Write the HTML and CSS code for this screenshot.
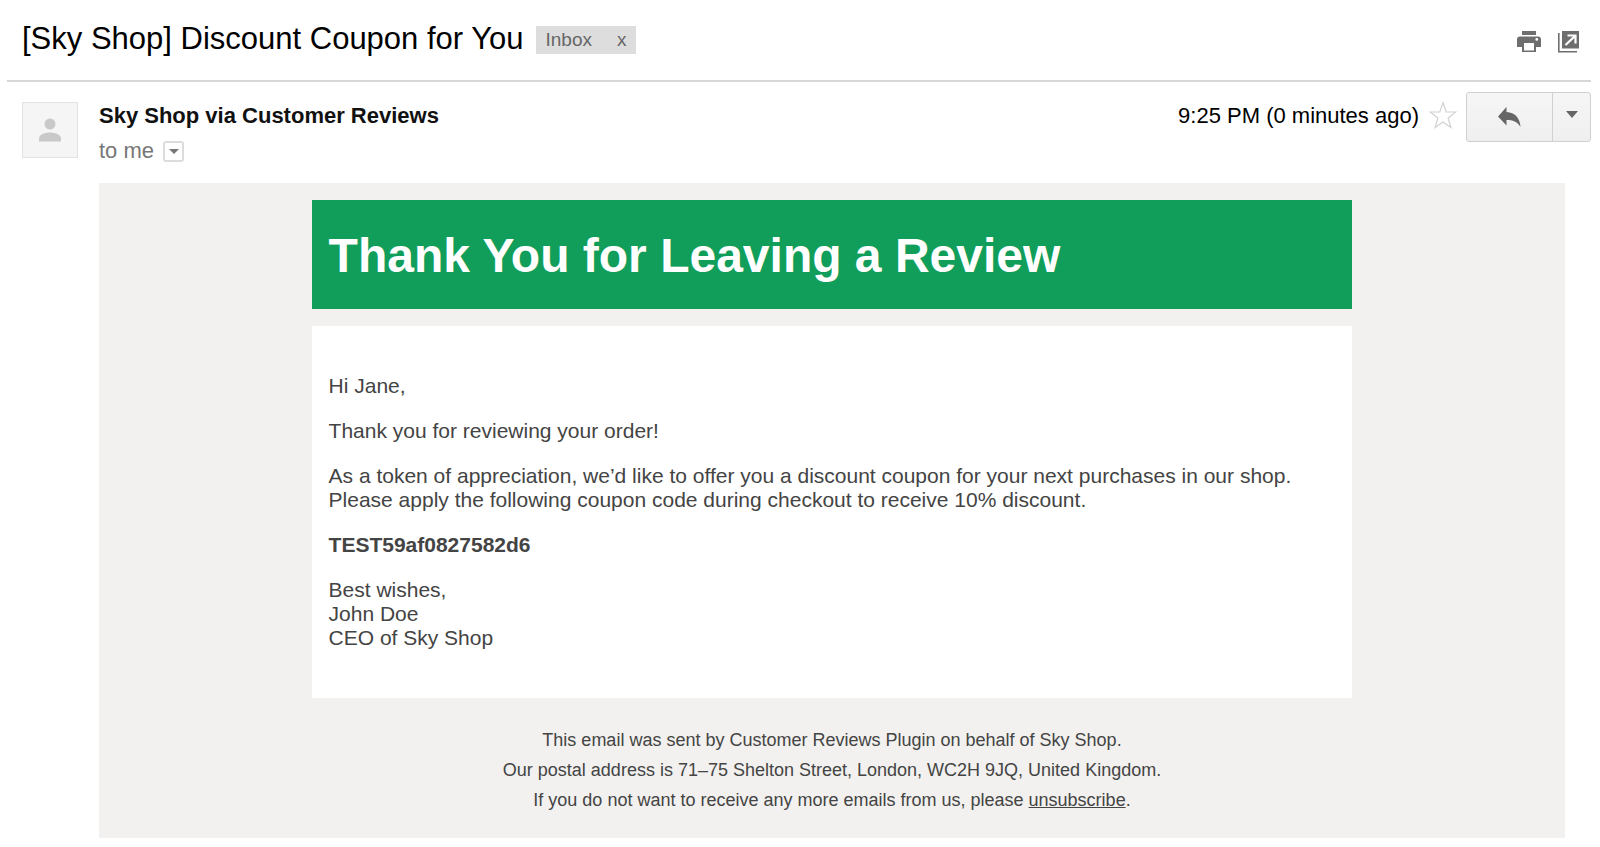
FILE: index.html
```html
<!DOCTYPE html>
<html lang="en">
<head>
  <meta charset="UTF-8">
  <meta name="viewport" content="width=device-width, initial-scale=1.0">
  <title>[Sky Shop] Discount Coupon for You</title>
  <link rel="stylesheet" href="styles.css">
</head>
<body>
  <header class="subject-bar">
    <h1>[Sky Shop] Discount Coupon for You</h1>
    <div class="label">
      <span>Inbox</span>
      <button type="button" aria-label="Remove label Inbox">x</button>
    </div>
    <div class="tools">
      <button type="button" aria-label="Print all">
        <svg width="24" height="22" viewBox="0 0 24 22">
          <path fill="#6e6e6e" d="M5 0h14v4H5z"/>
          <path fill="#6e6e6e" fill-rule="evenodd" d="M3 5.5h18a3 3 0 0 1 3 3V16h-5v5H5v-5H0V8.500a3 3 0 0 1 3-3zM7 12v7.500h10V12zM19.800 7a1.400 1.400 0 1 0 0 2.800 1.400 1.400 0 0 0 0-2.800z"/>
        </svg>
      </button>
      <button type="button" aria-label="In new window">
        <svg width="22" height="22" viewBox="0 0 22 22">
          <path fill="#6e6e6e" d="M4 0h17v17.500H4z"/>
          <path fill="none" stroke="#6e6e6e" stroke-width="1.600" d="M.8 2v18.700H19"/>
          <path fill="none" stroke="#fff" stroke-width="2.200" d="M9.500 4.500h8v8M17 5L7.500 14"/>
        </svg>
      </button>
    </div>
  </header>

  <main class="message">
    <div class="message-head">
      <div class="avatar">
        <svg width="22" height="24" viewBox="0 0 22 24">
          <circle cx="11" cy="6" r="5.500" fill="#c9c9c9"/>
          <path fill="#c9c9c9" d="M0 23.500v-3C0 16.500 6 14.500 11 14.500s11 2 11 6v3z"/>
        </svg>
      </div>
      <div class="sender">
        <h2>Sky Shop via Customer Reviews</h2>
        <div class="recipient">
          to me
          <button type="button" aria-label="Show details">
            <svg width="10" height="5" viewBox="0 0 10 5"><path fill="#777" d="M0 0h10L5 5z"/></svg>
          </button>
        </div>
      </div>
      <div class="actions">
        <span class="time">9:25 PM (0 minutes ago)</span>
        <button type="button" class="star" aria-label="Not starred">
          <svg width="28" height="28" viewBox="0 0 28 28">
            <path fill="none" stroke="#d2d2d2" stroke-width="1.200" d="M14 1.500l3.200 9.300 9.500.2-7.600 6 2.800 9.500-7.900-5.600-7.900 5.600 2.800-9.500-7.600-6 9.500-.2z"/>
          </svg>
        </button>
        <div class="split">
          <button type="button" class="reply" aria-label="Reply">
            <svg width="23" height="20" viewBox="0 0 23 20">
              <path fill="#666" d="M8.500 0v5C17 5.500 22 11 22.500 20 19 14.500 15 13 8.500 13v5.500L0 9.500z"/>
            </svg>
          </button>
          <button type="button" class="more" aria-label="More">
            <svg width="12" height="7" viewBox="0 0 12 7"><path fill="#666" d="M0 0h12L6 7z"/></svg>
          </button>
        </div>
      </div>
    </div>

    <div class="email">
      <div class="banner">Thank You for Leaving a Review</div>
      <div class="content">
        <p>Hi Jane,</p>
        <p>Thank you for reviewing your order!</p>
        <p>As a token of appreciation, we’d like to offer you a discount coupon for your next purchases in our shop.<br>Please apply the following coupon code during checkout to receive 10% discount.</p>
        <p><strong>TEST59af0827582d6</strong></p>
        <p>Best wishes,<br>John Doe<br>CEO of Sky Shop</p>
      </div>
      <footer>
        This email was sent by Customer Reviews Plugin on behalf of Sky Shop.<br>
        Our postal address is 71–75 Shelton Street, London, WC2H 9JQ, United Kingdom.<br>
        If you do not want to receive any more emails from us, please <a href="#">unsubscribe</a>.
      </footer>
    </div>
  </main>
</body>
</html>
```
FILE: styles.css
```css
* { box-sizing: border-box; }
body { font-family: "Liberation Sans", Arial, sans-serif; background: #fff; color: #000; margin: 0; padding: 0 9px 9px 7px; }
button { font: inherit; color: inherit; background: none; border: 0; padding: 0; cursor: pointer; }
svg { display: block; }

.subject-bar { display: flex; align-items: center; min-height: 82px; padding: 0 11px 3px 15px; border-bottom: 2px solid #d8d8d8; }
.subject-bar h1 { margin: 0; font-size: 31px; line-height: 36px; font-weight: normal; }
.label { display: flex; gap: 25px; margin: 3px 0 0 12px; padding: 0 10px; background: #ddd; color: #666; font-size: 19px; line-height: 28px; }
.tools { display: flex; gap: 17px; margin-left: auto; padding-top: 7px; }

.message-head { display: flex; align-items: flex-start; padding-top: 10px; }
.avatar { display: flex; align-items: center; justify-content: center; width: 56px; height: 56px; margin: 10px 21px 0 15px; background: #f5f5f5; border: 1px solid #e2e2e2; }
.sender { padding-top: 10px; }
.sender h2 { margin: 0; font-size: 22px; line-height: 28px; color: #111; }
.recipient { display: flex; align-items: center; gap: 9px; margin-top: 7px; color: #777; font-size: 22px; line-height: 28px; }
.recipient button { display: flex; align-items: center; justify-content: center; width: 21px; height: 21px; border: 2px solid #dcdcdc; border-radius: 3px; }
.actions { display: flex; align-items: center; margin-left: auto; }
.time { font-size: 22px; line-height: 28px; margin-top: -3px; }
.star { margin: -4px 9px 0 10px; }
.split { display: flex; height: 50px; border: 1px solid #d0d0d0; border-radius: 3px; background: linear-gradient(#f6f6f6, #efefef); }
.split button { display: flex; align-items: center; justify-content: center; }
.reply { width: 85px; }
.split .more { width: 38px; padding-bottom: 6px; border-left: 1px solid #d0d0d0; }

.email { margin: 18px 26px 0 92px; padding: 17px 0 23px; background: #f2f1ef; color: #444; }
.banner { width: 71%; margin: 0 auto 17px; padding: 28px 17px 25px; background: #119e5a; color: #fff; font-size: 48px; line-height: 56px; font-weight: bold; }
.content { width: 71%; margin: 0 auto; padding: 48px 17px; background: #fff; font-size: 21px; line-height: 24px; }
.content p { margin: 0 0 21px; }
.content p:last-child { margin-bottom: 0; }
footer { padding-top: 27px; text-align: center; font-size: 18px; line-height: 30px; }
footer a { color: inherit; }
```
